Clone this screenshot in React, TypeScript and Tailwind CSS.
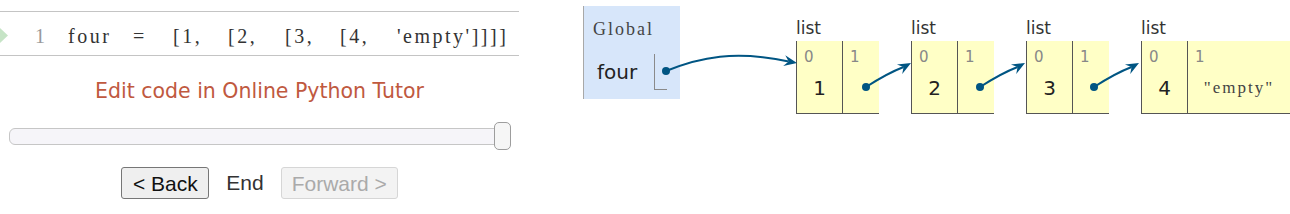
import React from 'react';

type Cell = { value: string; pointer?: boolean; wide?: boolean };

const lists: Cell[][] = [
  [{ value: '1' }, { value: '', pointer: true }],
  [{ value: '2' }, { value: '', pointer: true }],
  [{ value: '3' }, { value: '', pointer: true }],
  [{ value: '4' }, { value: '"empty"', wide: true }],
];

const ARROW = '#005583';

// foldback arrow head, tip at (x, y) pointing along (dx, dy)
function head(x: number, y: number, dx: number, dy: number) {
  const len = Math.hypot(dx, dy);
  const ux = dx / len;
  const uy = dy / len;
  const L = 13;
  const W = 5.5;
  const pts = [
    [x, y],
    [x - L * ux - W * uy, y - L * uy + W * ux],
    [x - 0.65 * L * ux, y - 0.65 * L * uy],
    [x - L * ux + W * uy, y - L * uy - W * ux],
  ];
  return {
    points: pts.map((p) => p.join(',')).join(' '),
    notch: pts[2],
  };
}

const Arrows = () => {
  const first = head(797, 63, 13, 2.5);
  const links = [866, 980, 1094].map((x) => ({
    from: [x, 87],
    h: head(x + 45, 63, 44, -24),
  }));
  return (
    <svg className="absolute inset-0 pointer-events-none" width={1290} height={214}>
      <circle cx={666} cy={71} r={4} fill={ARROW} />
      <path
        d={`M666,71 C700,57 735,50 ${first.notch[0]},${first.notch[1]}`}
        stroke={ARROW}
        strokeWidth={2}
        fill="none"
      />
      <polygon points={first.points} fill={ARROW} />
      {links.map((l, i) => (
        <g key={i}>
          <circle cx={l.from[0]} cy={l.from[1]} r={4} fill={ARROW} />
          <path
            d={`M${l.from[0]},${l.from[1]} Q${l.from[0] + 22},${l.from[1] - 14} ${l.h.notch[0]},${l.h.notch[1]}`}
            stroke={ARROW}
            strokeWidth={2}
            fill="none"
          />
          <polygon points={l.h.points} fill={ARROW} />
        </g>
      ))}
    </svg>
  );
};

const CodePanel = () => (
  <div className="w-[519px] shrink-0 pt-[11px]">
    {/* code line, tokens set on a fixed grid */}
    <div className="relative h-[45px] border-y border-[#c4c4c4] flex items-center pt-[4px] text-[20px] tracking-[2.5px] text-[#333] font-['Liberation_Serif',serif] whitespace-pre overflow-hidden">
      <svg className="absolute left-0 top-[15px]" width={9} height={17}>
        <polygon points="0,1 8,8.5 0,16" fill="#c6e4c6" />
      </svg>
      <span className="ml-[35px] w-[33px] text-[#999]">1</span>
      <span className="w-[65px]">four</span>
      <span className="w-[40px]">=</span>
      <span className="w-[55px]">[1,</span>
      <span className="w-[57px]">[2,</span>
      <span className="w-[55px]">[3,</span>
      <span className="w-[57px]">[4,</span>
      <span>'empty']]]]</span>
    </div>

    <div className="mt-[23px] leading-[24px] text-center text-[20.5px] text-[#c0593f] font-['DejaVu_Sans',sans-serif]">
      Edit code in Online Python Tutor
    </div>

    {/* step slider */}
    <div className="relative mt-[19px] ml-[9px] w-[502px] h-[28px] flex items-center">
      <div className="w-full h-[17px] rounded-[6px] border border-[#c6c6c6] bg-[#f6f5f9]" />
      <div className="absolute right-0 top-0 w-[17px] h-[28px] rounded-[5px] border border-[#9d9d9d] bg-[#f6f6f6]" />
    </div>

    <div className="mt-[17px] flex justify-center items-center gap-[17px] font-['Liberation_Sans',Arial,sans-serif] text-[21px]">
      <button className="w-[88px] h-[32px] rounded-[3px] border border-[#767676] bg-[#efefef] text-[#111] leading-none">
        &lt; Back
      </button>
      <span className="text-[#333]">End</span>
      <button disabled className="w-[117px] h-[32px] rounded-[3px] border border-[#d6d6d6] bg-[#f3f3f3] text-[#aaa] leading-none">
        Forward &gt;
      </button>
    </div>
  </div>
);

const ListBox = ({ cells }: { cells: Cell[] }) => (
  <div className="mt-[16px] flex flex-col">
    <div className="h-[24px] leading-[24px] text-[17px] text-[#333] font-['DejaVu_Sans',sans-serif]">list</div>
    <div className="mt-[1px] flex h-[73px] bg-[#ffffc6] border-l border-b border-[#555]">
      {cells.map((c, i) => (
        <div
          key={i}
          className={`flex flex-col ${i > 0 ? 'border-l border-[#555]' : ''} ${i === 0 ? 'w-[45px]' : c.wide ? 'w-[103px]' : 'w-[37px]'}`}
        >
          <div className="pl-[7px] pt-[7px] text-[15px] leading-[18px] text-[#888] font-['DejaVu_Sans',sans-serif]">{i}</div>
          {c.value && (
            <div
              className={`mt-[10px] text-center leading-[24px] ${c.wide ? "text-[17px] tracking-[2px] font-['Liberation_Serif',serif] text-[#444]" : "text-[20px] text-[#222] font-['DejaVu_Sans',sans-serif]"}`}
            >
              {c.value}
            </div>
          )}
        </div>
      ))}
    </div>
  </div>
);

const Visualizer = () => (
  <div className="ml-[64px] flex items-start">
    <div className="mt-[6px] w-[97px] h-[93px] border-l border-[#a8a8a8] bg-[#d7e6fa]">
      <div className="pt-[13px] pl-[9px] leading-[20px] text-[18px] tracking-[2px] text-[#444] font-['Liberation_Serif',serif]">Global</div>
      <div className="mt-[15px] flex items-center">
        <span className="ml-[13px] w-[57px] text-[20px] leading-[24px] text-[#222] font-['DejaVu_Sans',sans-serif]">four</span>
        <div className="w-[13px] h-[36px] border-l border-b border-[#8a8a8a]" />
      </div>
    </div>
    <div className="ml-[116px] flex gap-[32px]">
      {lists.map((cells, i) => (
        <ListBox key={i} cells={cells} />
      ))}
    </div>
  </div>
);

export default function App() {
  return (
    <div className="relative w-[1290px] h-[214px] overflow-hidden bg-white flex">
      <CodePanel />
      <Visualizer />
      <Arrows />
    </div>
  );
}
